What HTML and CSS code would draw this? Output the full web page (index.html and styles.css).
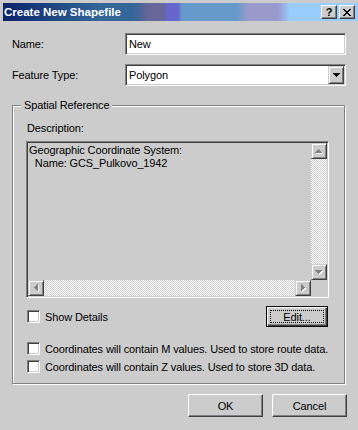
FILE: index.html
```html
<!DOCTYPE html>
<html lang="en">
<head>
    <meta charset="UTF-8">
    <title>Create New Shapefile</title>
    <link rel="stylesheet" href="styles.css">
</head>
<body>
    <div class="window">
        <div class="titlebar">
            <span class="title">Create New Shapefile</span>
            <span class="caption-btn">?</span>
            <span class="caption-btn">
                <svg width="8" height="7" viewBox="0 0 8 7"><path d="M0 0h2v1H0zM6 0h2v1H6zM1 1h2v1H1zM5 1h2v1H5zM2 2h4v1H2zM3 3h2v1H3zM2 4h4v1H2zM1 5h2v1H1zM5 5h2v1H5zM0 6h2v1H0zM6 6h2v1H6z" fill="#000"/></svg>
            </span>
        </div>

        <div class="content">
            <div class="field-row">
                <label class="field-label">Name:</label>
                <input class="text-input" type="text" value="New">
            </div>
            <div class="field-row second">
                <label class="field-label">Feature Type:</label>
                <div class="combo">
                    <span class="combo-value">Polygon</span>
                    <span class="combo-btn">
                        <svg width="7" height="4" viewBox="0 0 7 4"><path d="M0 0h7v1H6v1H5v1H4v1H3V3H2V2H1V1H0z" fill="#000"/></svg>
                    </span>
                </div>
            </div>

            <fieldset class="group">
                <legend>Spatial Reference</legend>
                <div class="desc-label">Description:</div>
                <div class="desc-box">
                    <div class="desc-text">Geographic Coordinate System:
  Name: GCS_Pulkovo_1942</div>
                    <div class="vscroll">
                        <span class="sb-btn">
                            <svg width="8" height="5" viewBox="0 0 8 5"><path transform="translate(1 1)" d="M3 0h1v1h1v1h1v1h1v1H0V3h1V2h1V1h1z" fill="#fff"/><path d="M3 0h1v1h1v1h1v1h1v1H0V3h1V2h1V1h1z" fill="#808080"/></svg>
                        </span>
                        <span class="sb-btn">
                            <svg width="8" height="5" viewBox="0 0 8 5"><path transform="translate(1 1)" d="M0 0h7v1H6v1H5v1H4v1H3V3H2V2H1V1H0z" fill="#fff"/><path d="M0 0h7v1H6v1H5v1H4v1H3V3H2V2H1V1H0z" fill="#808080"/></svg>
                        </span>
                    </div>
                    <div class="hscroll">
                        <span class="sb-btn">
                            <svg width="5" height="8" viewBox="0 0 5 8"><path transform="translate(1 1)" d="M3 0h1v7H3V6H2V5H1V4H0V3h1V2h1V1h1z" fill="#fff"/><path d="M3 0h1v7H3V6H2V5H1V4H0V3h1V2h1V1h1z" fill="#808080"/></svg>
                        </span>
                        <span class="sb-btn">
                            <svg width="5" height="8" viewBox="0 0 5 8"><path transform="translate(1 1)" d="M0 0h1v1h1v1h1v1h1v1H3v1H2v1H1v1H0z" fill="#fff"/><path d="M0 0h1v1h1v1h1v1h1v1H3v1H2v1H1v1H0z" fill="#808080"/></svg>
                        </span>
                    </div>
                    <div class="corner"></div>
                </div>

                <div class="details-row">
                    <label class="check"><span class="check-box"></span>Show Details</label>
                    <button class="btn btn-default"><span class="focus">Edit...</span></button>
                </div>

                <div class="check-list">
                    <label class="check"><span class="check-box"></span>Coordinates will contain M values. Used to store route data.</label>
                    <label class="check"><span class="check-box"></span>Coordinates will contain Z values. Used to store 3D data.</label>
                </div>
            </fieldset>

            <div class="actions">
                <button class="btn">OK</button>
                <button class="btn">Cancel</button>
            </div>
        </div>
    </div>
</body>
</html>
```

FILE: styles.css
```css
body {
    margin: 0;
    background-color: #cccccc;
    font-family: "Liberation Sans", Arial, sans-serif;
    font-size: 11px;
    letter-spacing: -0.12px;
    color: #000;
}
.window {
    width: 358px;
    height: 430px;
    padding-top: 3px;
    box-sizing: border-box;
    background-color: #cccccc;
}

/* title bar */
.titlebar {
    display: flex;
    align-items: center;
    height: 18px;
    margin-left: 3px;
    padding: 0 3px 0 1px;
    background: linear-gradient(to right,
        #0a246a 0, #336699 97px, #336699 130px, #666699 145px, #666699 160px,
        #6666cc 164px, #6666cc 175px, #6699cc 179px, #6699cc 234px,
        #9999cc 244px, #9999cc 275px, #99ccff 287px);
}
.title {
    flex: 1;
    color: #fff;
    font-weight: bold;
    font-size: 11.5px;
    letter-spacing: 0;
}
.caption-btn {
    display: flex;
    align-items: center;
    justify-content: center;
    width: 16px;
    height: 14px;
    margin-left: 2px;
    box-sizing: border-box;
    background-color: #cccccc;
    border: 1px solid;
    border-color: #fff #404040 #404040 #fff;
    box-shadow: inset -1px -1px #808080;
    font-weight: bold;
    font-size: 11px;
}

.content {
    padding: 0 11px 0 12px;
}

/* name / type rows */
.field-row {
    display: flex;
    align-items: center;
    height: 22px;
    margin-top: 12px;
}
.field-row.second {
    margin-top: 9px;
}
.field-label {
    width: 113px;
}
.text-input,
.combo {
    width: 221px;
    height: 22px;
    box-sizing: border-box;
    background-color: #fff;
    border: 1px solid;
    border-color: #808080 #fff #fff #808080;
    box-shadow: inset 1px 1px #404040, inset -1px -1px #cccccc;
}
.text-input {
    margin: 0;
    padding: 0 3px;
    font-family: inherit;
    font-size: 11px;
    letter-spacing: inherit;
    color: #000;
    outline: none;
}
.combo {
    display: flex;
    align-items: center;
    padding: 1px;
}
.combo-value {
    flex: 1;
    padding-left: 2px;
}
.combo-btn,
.sb-btn {
    display: flex;
    align-items: center;
    justify-content: center;
    box-sizing: border-box;
    background-color: #cccccc;
    border: 1px solid;
    border-color: #cccccc #404040 #404040 #cccccc;
    box-shadow: inset 1px 1px #fff, inset -1px -1px #808080;
}
.combo-btn {
    width: 16px;
    height: 18px;
}

/* group box */
.group {
    width: 333px;
    min-width: 0;
    box-sizing: border-box;
    margin: 13px 0 0;
    padding: 10px 0 10px 13px;
    border: 1px solid #808080;
    box-shadow: inset 1px 1px #fff, 1px 1px #fff;
}
.group legend {
    margin-left: -5px;
    padding: 0 3px;
    line-height: 13px;
    background-color: #cccccc;
}
.desc-label {
    line-height: 13px;
    margin-bottom: 6px;
    padding-left: 1px;
}
.desc-box {
    display: grid;
    grid-template-columns: 1fr 16px;
    grid-template-rows: 1fr 16px;
    width: 303px;
    height: 157px;
    box-sizing: border-box;
    border: 1px solid;
    border-color: #808080 #fff #fff #808080;
    box-shadow: inset 1px 1px #404040, inset -1px -1px #cccccc;
    padding: 1px;
}
.desc-text {
    padding: 1px 0 0 1px;
    line-height: 13px;
    white-space: pre;
    overflow: hidden;
}
.vscroll,
.hscroll {
    display: flex;
    justify-content: space-between;
    background-color: #fff;
    background-image: conic-gradient(#fff 25%, #cccccc 0 50%, #fff 0 75%, #cccccc 0);
    background-size: 2px 2px;
}
.vscroll {
    flex-direction: column;
}
.sb-btn {
    width: 16px;
    height: 16px;
}
.corner {
    background-color: #cccccc;
}

/* checkboxes and buttons */
.details-row {
    display: flex;
    align-items: center;
    justify-content: space-between;
    width: 303px;
    height: 21px;
    margin-top: 8px;
}
.check {
    display: flex;
    align-items: center;
    gap: 5px;
    height: 13px;
    margin-left: 1px;
}
.check-box {
    width: 13px;
    height: 13px;
    box-sizing: border-box;
    background-color: #fff;
    border: 1px solid;
    border-color: #808080 #fff #fff #808080;
    box-shadow: inset 1px 1px #404040, inset -1px -1px #cccccc;
}
.check-list {
    display: flex;
    flex-direction: column;
    gap: 5px;
    margin-top: 15px;
}
.btn {
    display: flex;
    align-items: center;
    justify-content: center;
    width: 75px;
    height: 23px;
    padding: 0;
    box-sizing: border-box;
    background-color: #cccccc;
    border: 1px solid;
    border-color: #fff #404040 #404040 #fff;
    box-shadow: inset -1px -1px #808080;
    font-family: inherit;
    font-size: 11px;
    letter-spacing: inherit;
    color: #000;
}
.btn-default {
    width: 62px;
    height: 21px;
    margin-right: 1px;
    border-color: #000;
    box-shadow: inset 1px 1px #fff, inset -1px -1px #404040, inset -2px -2px #808080;
}
.focus {
    display: flex;
    align-items: center;
    justify-content: center;
    width: 54px;
    height: 13px;
    box-sizing: border-box;
    border: 1px dotted #000;
}
.actions {
    display: flex;
    justify-content: flex-end;
    gap: 9px;
    margin-top: 10px;
}
```
